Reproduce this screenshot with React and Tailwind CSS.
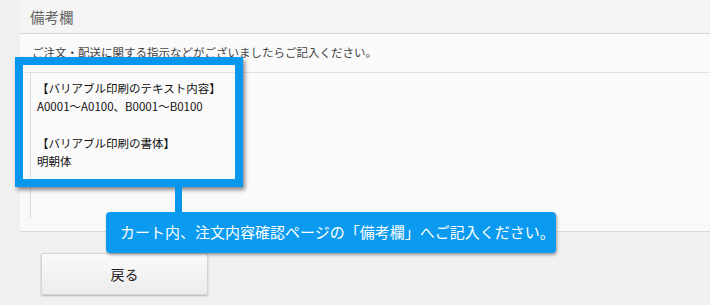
export default function App() {
  const font = { fontFamily: '"Noto Sans CJK JP", "Noto Sans", sans-serif' };

  return (
    <div
      className="relative w-[710px] h-[305px] overflow-hidden bg-[#f0f0f0]"
      style={font}
    >
      {/* 備考欄 panel */}
      <div className="ml-5 border-b border-[#dadada] bg-[#f9f9f9]">
        <div className="h-[34px] flex items-center pl-[10px] bg-[#f4f4f4] border-b border-[#d9d9d9] text-[14.5px] text-[#666]">
          備考欄
        </div>
        <div className="h-[39px] flex items-center pl-[12px] bg-[#fafafa] border-b border-[#e2e2e2] text-[11.5px] text-[#444] whitespace-nowrap">
          ご注文・配送に関する指示などがございましたらご記入ください。
        </div>
        <div className="h-[158px] pl-[10px]">
          <div className="h-[145px] border-l border-[#dcdcdc] bg-[#fafafa]" />
        </div>
      </div>

      {/* back button */}
      <button className="ml-[41px] mt-[21px] w-[167px] h-[42px] flex items-center justify-center rounded-[2px] border border-[#d4d4d4] bg-gradient-to-b from-[#fafafa] to-[#ececec] shadow-[0_1px_2px_rgba(0,0,0,0.25)] text-[14px] text-[#222]">
        戻る
      </button>

      {/* highlight box over the textarea */}
      <div className="absolute left-[15px] top-[57px] w-[228px] h-[130px] border-8 border-[#0797ec] shadow-[2px_3px_4px_rgba(0,0,0,0.45)]">
        <div className="pl-[14px] pt-[14px] text-[11.5px] leading-[18.3px] text-[#111] whitespace-nowrap">
          <p>【バリアブル印刷のテキスト内容】</p>
          <p>A0001〜A0100、B0001〜B0100</p>
          <p>&nbsp;</p>
          <p>【バリアブル印刷の書体】</p>
          <p>明朝体</p>
        </div>
      </div>

      {/* connector */}
      <div className="absolute left-[175px] top-[187px] w-[7px] h-[26px] bg-[#0797ec]" />

      {/* tooltip */}
      <div className="absolute left-[106px] top-[212px] w-[450px] h-[41px] flex items-center pl-[14px] rounded-[4px] bg-[#0a9af0] shadow-[1px_2px_3px_rgba(0,0,0,0.35)] text-[15px] text-white whitespace-nowrap">
        カート内、注文内容確認ページの「備考欄」へご記入ください。
      </div>
    </div>
  );
}
